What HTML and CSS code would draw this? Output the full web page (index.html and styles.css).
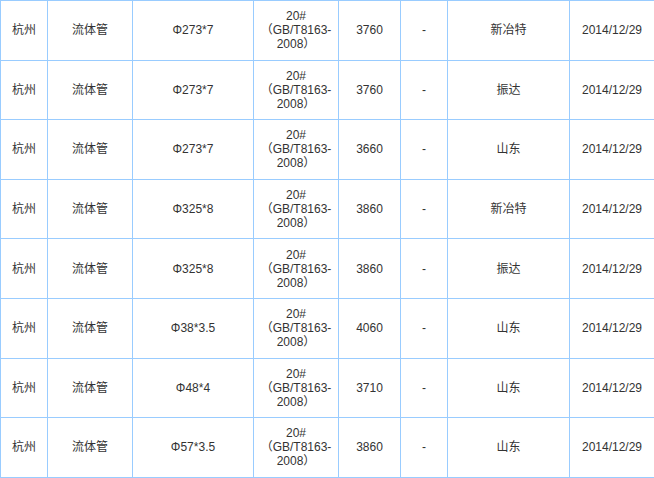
FILE: index.html
```html
<!DOCTYPE html>
<html lang="zh">
<head>
<meta charset="utf-8">
<title>钢管价格</title>
<link rel="stylesheet" href="styles.css">
</head>
<body>
<table class="price-table">
  <colgroup>
    <col class="c1"><col class="c2"><col class="c3"><col class="c4"><col class="c5"><col class="c6"><col class="c7"><col class="c8">
  </colgroup>
  <tbody>
    <tr><td>杭州</td><td>流体管</td><td>Φ273*7</td><td>20#<br>（GB/T8163-<br>2008）</td><td>3760</td><td>-</td><td>新冶特</td><td>2014/12/29</td></tr>
    <tr><td>杭州</td><td>流体管</td><td>Φ273*7</td><td>20#<br>（GB/T8163-<br>2008）</td><td>3760</td><td>-</td><td>振达</td><td>2014/12/29</td></tr>
    <tr><td>杭州</td><td>流体管</td><td>Φ273*7</td><td>20#<br>（GB/T8163-<br>2008）</td><td>3660</td><td>-</td><td>山东</td><td>2014/12/29</td></tr>
    <tr><td>杭州</td><td>流体管</td><td>Φ325*8</td><td>20#<br>（GB/T8163-<br>2008）</td><td>3860</td><td>-</td><td>新冶特</td><td>2014/12/29</td></tr>
    <tr><td>杭州</td><td>流体管</td><td>Φ325*8</td><td>20#<br>（GB/T8163-<br>2008）</td><td>3860</td><td>-</td><td>振达</td><td>2014/12/29</td></tr>
    <tr><td>杭州</td><td>流体管</td><td>Φ38*3.5</td><td>20#<br>（GB/T8163-<br>2008）</td><td>4060</td><td>-</td><td>山东</td><td>2014/12/29</td></tr>
    <tr><td>杭州</td><td>流体管</td><td>Φ48*4</td><td>20#<br>（GB/T8163-<br>2008）</td><td>3710</td><td>-</td><td>山东</td><td>2014/12/29</td></tr>
    <tr><td>杭州</td><td>流体管</td><td>Φ57*3.5</td><td>20#<br>（GB/T8163-<br>2008）</td><td>3860</td><td>-</td><td>山东</td><td>2014/12/29</td></tr>
  </tbody>
</table>
</body>
</html>
```
FILE: styles.css
```css
html, body {
  margin: 0;
  padding: 0;
  background: #ffffff;
}
.price-table {
  border-collapse: collapse;
  table-layout: fixed;
  width: 654px;
  font-family: "Liberation Sans", "Noto Sans CJK SC", sans-serif;
  font-size: 12px;
  line-height: 14px;
  color: #333333;
}
.price-table td {
  border: 1px solid #99ccff;
  text-align: center;
  vertical-align: middle;
  padding: 0 2px;
  height: 58.6px;
  box-sizing: border-box;
}
.price-table tr {
  height: 59.6px;
}
.c1 { width: 47px; }
.c2 { width: 85px; }
.c3 { width: 121px; }
.c4 { width: 85px; }
.c5 { width: 62px; }
.c6 { width: 47px; }
.c7 { width: 122px; }
.c8 { width: 85px; }
```
